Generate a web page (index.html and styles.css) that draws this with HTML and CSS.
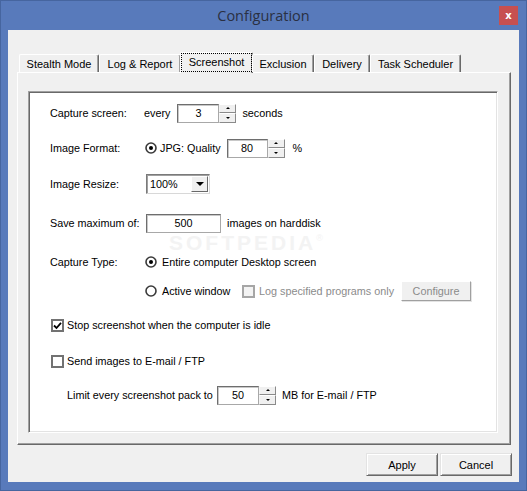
FILE: index.html
```html
<!DOCTYPE html>
<html>
<head>
<meta charset="utf-8">
<title>Configuration</title>
<link rel="stylesheet" href="styles.css">
</head>
<body>
<div class="window">
  <div class="titlebar">
    <span class="title">Configuration</span>
    <span class="close">x</span>
  </div>
  <div class="client">
    <div class="tabs">
      <div class="tab t-stealth">Stealth Mode</div>
      <div class="tab t-log">Log &amp; Report</div>
      <div class="tab t-shot active"><span class="focus">Screenshot</span></div>
      <div class="tab t-excl">Exclusion</div>
      <div class="tab t-deliv">Delivery</div>
      <div class="tab t-task">Task Scheduler</div>
    </div>
    <div class="panel">
      <div class="sheet">
        <div class="watermark">SOFTPEDIA<sup>®</sup></div>

        <div class="row">
          <span class="lbl">Capture screen:</span>
          <span>every</span>
          <span class="spin ml7"><span class="field w42">3</span><span class="arrows"><span class="arr up"></span><span class="arr down"></span></span></span>
          <span class="ml6">seconds</span>
        </div>

        <div class="row g15">
          <span class="lbl l95">Image Format:</span>
          <svg class="radio" viewBox="0 0 12 12"><circle cx="6" cy="6" r="5" fill="#fff" stroke="#3a3a3a" stroke-width="1.6"/><circle cx="6" cy="6" r="2" fill="#000"/></svg>
          <span class="ml3">JPG: Quality</span>
          <span class="spin ml6"><span class="field w41">80</span><span class="arrows"><span class="arr up"></span><span class="arr down"></span></span></span>
          <span class="ml8">%</span>
        </div>

        <div class="row g16">
          <span class="lbl l96">Image Resize:</span>
          <span class="select"><span class="sel-text">100%</span><span class="sel-btn"><span class="tri-down"></span></span></span>
        </div>

        <div class="row g19">
          <span class="lbl l96">Save maximum of:</span>
          <span class="field w75">500</span>
          <span class="ml6">images on harddisk</span>
        </div>

        <div class="row g19">
          <span class="lbl l95">Capture Type:</span>
          <svg class="radio" viewBox="0 0 12 12"><circle cx="6" cy="6" r="5" fill="#fff" stroke="#3a3a3a" stroke-width="1.6"/><circle cx="6" cy="6" r="2" fill="#000"/></svg>
          <span class="ml5">Entire computer Desktop screen</span>
        </div>

        <div class="row g9">
          <span class="lbl l95"></span>
          <svg class="radio" viewBox="0 0 12 12"><circle cx="6" cy="6" r="5" fill="#fff" stroke="#3a3a3a" stroke-width="1.6"/></svg>
          <span class="ml5 w-active">Active window</span>
          <span class="check disabled"></span>
          <span class="ml4 dim w-log">Log specified programs only</span>
          <span class="btn-small">Configure</span>
        </div>

        <div class="row g14">
          <span class="check ml1"><svg viewBox="0 0 9 9"><path d="M1 4.5 L3.5 7 L8 1.8" fill="none" stroke="#000" stroke-width="1.8"/></svg></span>
          <span class="ml3">Stop screenshot when the computer is idle</span>
        </div>

        <div class="row g16">
          <span class="check ml1"></span>
          <span class="ml3">Send images to E-mail / FTP</span>
        </div>

        <div class="row g14 indent">
          <span class="w-limit">Limit every screenshot pack to</span>
          <span class="spin"><span class="field w42">50</span><span class="arrows"><span class="arr up"></span><span class="arr down"></span></span></span>
          <span class="ml6">MB for E-mail / FTP</span>
        </div>
      </div>
    </div>
    <div class="actions">
      <span class="btn">Apply</span>
      <span class="btn">Cancel</span>
    </div>
  </div>
</div>
</body>
</html>
```

FILE: styles.css
```css
html, body {
  margin: 0;
  padding: 0;
  background: #587abb;
}
body {
  font-family: "Liberation Sans", Arial, sans-serif;
  font-size: 10.8px;
  color: #000;
}
.window {
  width: 527px;
  height: 491px;
  box-sizing: border-box;
  border: 1px solid #46659f;
  background: #587abb;
  padding: 0 7px 8px 7px;
  display: flex;
  flex-direction: column;
}
.titlebar {
  height: 29px;
  flex: none;
  display: grid;
  grid-template-columns: 1fr auto 1fr;
  align-items: start;
}
.title {
  grid-column: 2;
  font-family: "Open Sans", "Noto Sans", sans-serif;
  font-size: 14.5px;
  line-height: 30px;
  color: #2a3042;
}
.close {
  grid-column: 3;
  justify-self: end;
  margin-top: 5px;
  margin-right: 1px;
  width: 19px;
  height: 19px;
  background: #c75050;
  color: #fff;
  font-family: "DejaVu Sans", sans-serif;
  font-weight: bold;
  font-size: 10px;
  display: flex;
  align-items: center;
  justify-content: center;
}
.client {
  flex: 1;
  background: #f0f0f0;
  display: flex;
  flex-direction: column;
  padding-top: 22px;
}
.tabs {
  display: flex;
  align-items: flex-end;
  height: 20px;
  margin-left: 11px;
  position: relative;
  z-index: 1;
}
.tab {
  height: 18px;
  box-sizing: border-box;
  border: 1px solid;
  border-color: #fff #696969 transparent #fff;
  border-bottom: none;
  border-radius: 2px 2px 0 0;
  box-shadow: inset -1px 0 #a0a0a0;
  display: flex;
  align-items: center;
  justify-content: center;
  background: #f0f0f0;
  font-size: 11px;
}
.t-stealth { width: 80px; }
.t-log { width: 82px; }
.t-shot { width: 73px; }
.t-excl { width: 62px; }
.t-deliv { width: 56px; }
.t-task { width: 91px; }
.tab.active {
  height: 21px;
  margin: 0 -1px -1px -1px;
  padding: 1px 1px 2px 1px;
  align-items: stretch;
}
.focus {
  flex: 1;
  display: flex;
  align-items: center;
  justify-content: center;
  outline: 1px dotted #000;
  padding-bottom: 2px;
}
.panel {
  margin-left: 9px;
  width: 494px;
  height: 373px;
  box-sizing: border-box;
  border: 1px solid;
  border-color: #fff #696969 #696969 #fff;
  box-shadow: inset -1px -1px #a0a0a0;
  padding: 18px 0 0 10px;
}
.sheet {
  position: relative;
  width: 470px;
  height: 342px;
  box-sizing: border-box;
  background: #fff;
  border: 1px solid;
  border-color: #a0a0a0 #fff #fff #a0a0a0;
  box-shadow: inset 1px 1px #696969, inset -1px -1px #e3e3e3;
  padding: 11px 0 0 21px;
}
.watermark {
  position: absolute;
  left: 140px;
  top: 142px;
  height: 18px;
  line-height: 18px;
  font-family: "Liberation Sans", Arial, sans-serif;
  font-weight: bold;
  font-size: 21px;
  letter-spacing: 3px;
  color: #f3f3f3;
  pointer-events: none;
}
.watermark sup {
  font-size: 9px;
  font-weight: normal;
  vertical-align: top;
  line-height: 9px;
}
.row {
  position: relative;
  display: flex;
  align-items: center;
  height: 20px;
  white-space: nowrap;
}
.g9 { margin-top: 9px; }
.g14 { margin-top: 14px; }
.g15 { margin-top: 15px; }
.g16 { margin-top: 16px; }
.g19 { margin-top: 19px; }
.indent { padding-left: 17px; }
.lbl { width: 94px; flex: none; }
.l95 { width: 95px; }
.l96 { width: 96px; }
.ml1 { margin-left: 1px; }
.ml3 { margin-left: 3px; }
.ml4 { margin-left: 4px; }
.ml5 { margin-left: 5px; }
.ml6 { margin-left: 6px; }
.ml7 { margin-left: 7px; }
.ml8 { margin-left: 8px; }
.w-active { width: 80px; }
.w-log { width: 142px; }
.w-limit { width: 150px; }
.dim { color: #8b8b8b; }

.field {
  height: 19px;
  box-sizing: border-box;
  border: 1px solid;
  border-color: #6e6e6e #a8a8a8 #a8a8a8 #6e6e6e;
  box-shadow: inset 1px 1px #c8c8c8;
  background: #fff;
  display: flex;
  align-items: center;
  justify-content: center;
}
.w41 { width: 41px; }
.w42 { width: 42px; }
.w75 { width: 75px; }
.spin {
  display: flex;
  align-items: stretch;
  height: 19px;
}
.arrows {
  width: 17px;
  display: flex;
  flex-direction: column;
}
.arr {
  flex: 1;
  box-sizing: border-box;
  background: #f0f0f0;
  border: 1px solid;
  border-color: #fff #8a8a8a #8a8a8a #f4f4f4;
  display: flex;
  align-items: center;
  justify-content: center;
}
.arr.up::before {
  content: "";
  border-left: 2px solid transparent;
  border-right: 2px solid transparent;
  border-bottom: 2px solid #000;
}
.arr.down::before {
  content: "";
  border-left: 2px solid transparent;
  border-right: 2px solid transparent;
  border-top: 2px solid #000;
}
.radio {
  width: 12px;
  height: 12px;
  flex: none;
}
.check {
  width: 13px;
  height: 13px;
  box-sizing: border-box;
  flex: none;
  border: 2px solid #727272;
  background: #fff;
  display: flex;
  align-items: center;
  justify-content: center;
}
.check svg {
  width: 9px;
  height: 9px;
}
.check.disabled {
  border-color: #a6a6a6;
  background: #f3f3f3;
}
.btn-small {
  width: 70px;
  height: 20px;
  box-sizing: border-box;
  border: 1px solid;
  border-color: #fff #a0a0a0 #a0a0a0 #fff;
  box-shadow: 1px 1px 0 #e3e3e3;
  background: #f0f0f0;
  color: #8b8b8b;
  display: flex;
  align-items: center;
  justify-content: center;
}
.select {
  width: 64px;
  height: 20px;
  box-sizing: border-box;
  border: 1px solid;
  border-color: #7a7a7a #d8d8d8 #d8d8d8 #7a7a7a;
  box-shadow: inset 1px 1px #a0a0a0;
  background: #fff;
  display: flex;
  align-items: stretch;
  padding: 1px;
}
.sel-text {
  flex: 1;
  display: flex;
  align-items: center;
  padding-left: 2px;
}
.sel-btn {
  width: 17px;
  box-sizing: border-box;
  background: #f0f0f0;
  border: 1px solid;
  border-color: #fff #696969 #696969 #fff;
  display: flex;
  align-items: center;
  justify-content: center;
}
.tri-down {
  border-left: 4px solid transparent;
  border-right: 4px solid transparent;
  border-top: 4px solid #000;
}
.actions {
  display: flex;
  justify-content: flex-end;
  gap: 2px;
  margin: 8px 7px 0 0;
}
.btn {
  width: 72px;
  height: 23px;
  box-sizing: border-box;
  background: #f0f0f0;
  border: 1px solid;
  border-color: #e3e3e3 #696969 #696969 #e3e3e3;
  box-shadow: inset 1px 1px #fff, inset -1px -1px #a0a0a0;
  display: flex;
  align-items: center;
  justify-content: center;
  font-size: 11px;
}
```
